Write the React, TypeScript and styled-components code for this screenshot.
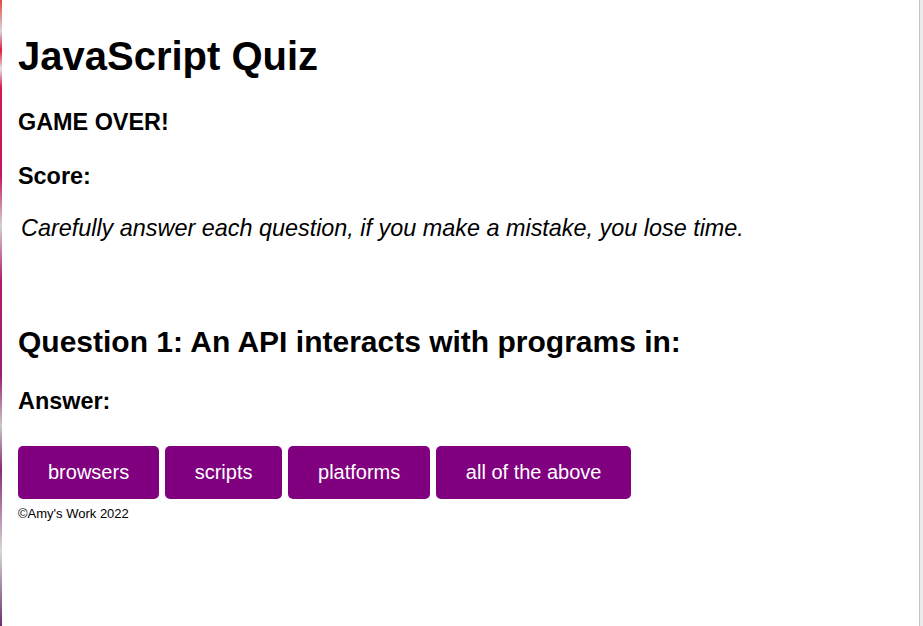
import React from "react";
import styled, { createGlobalStyle } from "styled-components";

const Global = createGlobalStyle`
  html, body {
    margin: 0;
    padding: 0;
    background: #ffffff;
  }
  body {
    font-family: "Liberation Sans", Arial, Helvetica, sans-serif;
    font-size: 20px;
    color: #000000;
  }
`;

const Page = styled.div`
  display: flex;
  min-height: 626px;
  background: #ffffff;
`;

const LeftEdge = styled.div`
  flex: 0 0 2px;
  background: linear-gradient(
    to bottom,
    #e24a3c 0%,
    #d8d8d8 5%,
    #e01a3c 8%,
    #e4e4e4 11%,
    #d9174d 14%,
    #c41560 28%,
    #d2d2d2 36%,
    #b4186a 45%,
    #9a1f72 60%,
    #c8c8c8 68%,
    #8a2a74 75%,
    #d8d8d8 88%,
    #6b2f6e 100%
  );
`;

const RightEdge = styled.div`
  flex: 0 0 4px;
  box-sizing: border-box;
  border-left: 1px solid #c4c4c4;
  background: #ececec;
`;

const Main = styled.main`
  flex: 1;
  padding: 33px 16px 0 16px;
`;

const Title = styled.h1`
  margin: 0 0 30px;
  font-size: 40px;
  line-height: 46px;
  font-weight: bold;
`;

const Heading = styled.h3<{ $after: number }>`
  margin: 0 0 ${(p) => p.$after}px;
  font-size: 23.4px;
  line-height: 27px;
  font-weight: bold;
`;

const Instructions = styled.p`
  margin: 0 0 83px;
  padding-left: 3px;
  font-size: 23.4px;
  line-height: 27px;
  font-style: italic;
`;

const Question = styled.h2`
  margin: 0 0 29px;
  font-size: 30px;
  line-height: 34px;
  font-weight: bold;
`;

const Choices = styled.div`
  display: flex;
  gap: 5.56px;
  margin: 0;
`;

const Choice = styled.button`
  border: none;
  border-radius: 5px;
  background: #800080;
  color: #ffffff;
  font-family: "Liberation Sans", Arial, Helvetica, sans-serif;
  font-size: 20px;
  line-height: 23px;
  padding: 15px 30px;
  cursor: pointer;
`;

const Footer = styled.footer`
  margin-top: 7px;
  font-size: 13px;
  line-height: 15px;
`;

const answers = ["browsers", "scripts", "platforms", "all of the above"];

export default function App() {
  return (
    <>
      <Global />
      <Page>
        <LeftEdge />
        <Main>
          <Title>JavaScript Quiz</Title>
          <Heading $after={27}>GAME OVER!</Heading>
          <Heading $after={25}>Score:</Heading>
          <Instructions>
            Carefully answer each question, if you make a mistake, you lose time.
          </Instructions>
          <Question>Question 1: An API interacts with programs in:</Question>
          <Heading $after={31}>Answer:</Heading>
          <Choices>
            {answers.map((a) => (
              <Choice key={a}>{a}</Choice>
            ))}
          </Choices>
          <Footer>©Amy's Work 2022</Footer>
        </Main>
        <RightEdge />
      </Page>
    </>
  );
}
